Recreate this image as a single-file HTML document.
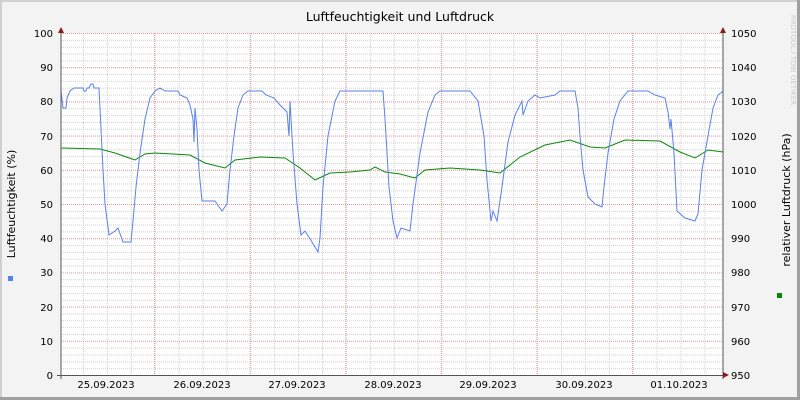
<!DOCTYPE html>
<html><head><meta charset="utf-8"><style>
html,body{margin:0;padding:0;}
body{width:800px;height:400px;overflow:hidden;background:#f3f3f3;}
svg{display:block;font-family:"DejaVu Sans","Liberation Sans",sans-serif;}
</style></head><body>
<svg width="800" height="400" viewBox="0 0 800 400" xmlns="http://www.w3.org/2000/svg">
<defs>
<pattern id="hmin" x="61" y="375" width="2" height="6.84" patternUnits="userSpaceOnUse">
<rect x="0" y="0" width="1" height="1" fill="#d0d0d0"/></pattern>
<pattern id="vmin" x="59.1" y="33" width="23.9" height="2" patternUnits="userSpaceOnUse">
<rect x="0" y="0" width="1" height="1" fill="#d0d0d0"/></pattern>
<pattern id="hmaj" x="61" y="375" width="2" height="34.2" patternUnits="userSpaceOnUse">
<rect x="0" y="0" width="1" height="1" fill="#e89a9a"/></pattern>
<pattern id="vmaj" x="154" y="33" width="95.6" height="2" patternUnits="userSpaceOnUse">
<rect x="0" y="0" width="1" height="1" fill="#e89a9a"/></pattern>
</defs>
<rect x="0" y="0" width="800" height="400" fill="#f3f3f3"/>
<rect x="0" y="0" width="800" height="2" fill="#d0d0d0"/>
<rect x="0" y="0" width="2" height="400" fill="#d0d0d0"/>
<rect x="0" y="397" width="800" height="3" fill="#a0a0a0"/>
<rect x="797" y="0" width="3" height="400" fill="#a0a0a0"/>
<rect x="61" y="33" width="662" height="342" fill="#ffffff"/>
<rect x="61" y="33" width="662" height="342" fill="url(#hmin)"/>
<rect x="61" y="33" width="662" height="342" fill="url(#vmin)"/>
<rect x="61" y="33" width="662" height="342" fill="url(#hmaj)"/>
<rect x="61" y="33" width="662" height="342" fill="url(#vmaj)"/>
<text x="400" y="21" font-size="12.5" text-anchor="middle" fill="#000">Luftfeuchtigkeit und Luftdruck</text>
<g font-size="10" fill="#000" text-anchor="end">
<text x="53" y="37">100</text><text x="53" y="71">90</text><text x="53" y="105">80</text><text x="53" y="140">70</text><text x="53" y="174">60</text><text x="53" y="208">50</text><text x="53" y="242">40</text><text x="53" y="276">30</text><text x="53" y="311">20</text><text x="53" y="345">10</text><text x="53" y="379">0</text>
</g>
<g font-size="10" fill="#000">
<text x="731" y="37">1050</text><text x="731" y="71">1040</text><text x="731" y="105">1030</text><text x="731" y="140">1020</text><text x="731" y="174">1010</text><text x="731" y="208">1000</text><text x="731" y="242">990</text><text x="731" y="276">980</text><text x="731" y="311">970</text><text x="731" y="345">960</text><text x="731" y="379">950</text>
</g>
<g font-size="10" fill="#000" text-anchor="middle">
<text x="106" y="388">25.09.2023</text><text x="202" y="388">26.09.2023</text><text x="297" y="388">27.09.2023</text><text x="393" y="388">28.09.2023</text><text x="488" y="388">29.09.2023</text><text x="584" y="388">30.09.2023</text><text x="679" y="388">01.10.2023</text>
</g>
<text transform="translate(15,204) rotate(-90)" font-size="11" text-anchor="middle" fill="#000">Luftfeuchtigkeit (%)</text>
<text transform="translate(790,200) rotate(-90)" font-size="11" text-anchor="middle" fill="#000">relativer Luftdruck (hPa)</text>
<text transform="translate(791,60) rotate(90)" font-size="7" text-anchor="middle" fill="#c8c8c8">RRDTOOL / TOBI OETIKER</text>
<rect x="8" y="276" width="5" height="5" fill="#5a82ee"/>
<rect x="777" y="293" width="5" height="5" fill="#008800"/>
<polyline fill="none" stroke="#0a8a0a" stroke-width="1" points="61,148 100,149 115,153 135,160 145,154 155,153 190,155 205,163 225,168 235,160 260,157 285,158 300,168 315,180 330,173 350,172 370,170 375,167 385,172 400,174 415,178 425,170 450,168 480,170 500,173 520,157 545,145 570,140 590,147 605,148 625,140 660,141 680,152 695,158 708,150 723,152"/>
<polyline fill="none" stroke="#5a82ee" stroke-width="1" points="61,91 63,108 66,108 67,98 70,91 74,88 83,88 84,91 86,91 87,88 89,88 91,84 93,84 94,88 99,88 100,108 103,170 105,204 109,235 115,231 118,228 123,242 131,242 133,221 136,187 140,153 145,119 150,98 155,91 160,88 165,91 178,91 180,95 187,98 190,105 193,119 194,142 195,108 197,129 199,170 202,201 215,201 222,211 227,204 230,170 234,136 238,108 243,95 248,91 262,91 266,95 274,98 280,105 287,112 289,136 290,101 293,153 297,204 301,235 305,231 312,242 318,252 320,238 323,187 328,136 335,101 340,91 383,91 385,119 389,187 393,221 397,238 401,228 410,231 413,204 420,153 428,112 435,95 440,91 470,91 478,101 484,136 487,180 491,221 493,211 497,221 502,187 508,142 515,115 522,101 523,115 528,101 535,95 540,98 555,95 560,91 575,91 578,108 580,136 583,170 588,197 595,204 602,207 604,187 608,153 614,119 620,101 628,91 648,91 655,95 665,98 668,112 670,129 671,119 674,153 677,211 685,218 695,221 698,214 702,170 708,136 713,108 718,95 723,91"/>
<line x1="61" y1="30" x2="61" y2="379" stroke="#555" stroke-width="1"/>
<line x1="723" y1="30" x2="723" y2="379" stroke="#555" stroke-width="1"/>
<line x1="57" y1="375.5" x2="727" y2="375.5" stroke="#555" stroke-width="1"/>
<polygon points="58,33 64,33 61,27" fill="#8b1a1a"/>
<polygon points="720,33 726,33 723,27" fill="#8b1a1a"/>
<polygon points="723,372 723,378 729,375" fill="#8b1a1a"/>
</svg>
</body></html>
